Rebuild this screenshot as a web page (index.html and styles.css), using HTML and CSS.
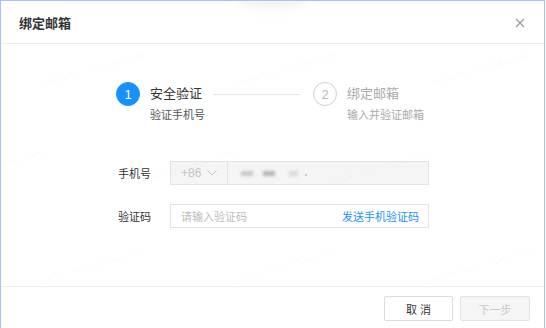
FILE: index.html
```html
<!DOCTYPE html>
<html lang="zh-CN">
<head>
    <meta charset="UTF-8">
    <title>绑定邮箱</title>
    <link rel="stylesheet" href="styles.css">
</head>
<body>
    <div class="dialog">
        <div class="top-shadow"></div>
        <div class="dialog-header">
            <span class="dialog-title">绑定邮箱</span>
            <svg class="close" width="10" height="10" viewBox="0 0 10 10">
                <path d="M1 1L9 9M9 1L1 9" stroke="#999" stroke-width="1.1" fill="none"/>
            </svg>
        </div>
        <div class="dialog-body">
            <div class="steps">
                <div class="step active">
                    <div class="step-num">1</div>
                    <div class="step-text">
                        <div class="step-title">安全验证</div>
                        <div class="step-desc">验证手机号</div>
                    </div>
                </div>
                <div class="step-line"></div>
                <div class="step">
                    <div class="step-num">2</div>
                    <div class="step-text">
                        <div class="step-title">绑定邮箱</div>
                        <div class="step-desc">输入并验证邮箱</div>
                    </div>
                </div>
            </div>
            <div class="form">
                <div class="form-row">
                    <label>手机号</label>
                    <div class="input disabled">
                        <div class="prefix">+86
                            <svg width="10" height="6" viewBox="0 0 10 6"><path d="M0.5 0.5L5 5L9.5 0.5" stroke="#c4c4c4" stroke-width="1" fill="none"/></svg>
                        </div>
                        <div class="masked">
                            <span class="blob b1"></span>
                            <span class="blob b2"></span>
                            <span class="blob b3"></span>
                            <span class="blob b4"></span>
                        </div>
                    </div>
                </div>
                <div class="form-row">
                    <label>验证码</label>
                    <div class="input">
                        <span class="placeholder">请输入验证码</span>
                        <a class="send">发送手机验证码</a>
                    </div>
                </div>
            </div>
        </div>
        <div class="dialog-footer">
            <button class="btn">取 消</button>
            <button class="btn btn-disabled">下一步</button>
        </div>
        <!-- 水印 -->
        <div class="watermarks">
            <span class="wm" style="left:38px;top:64px">wangyongwei 1618804931</span>
            <span class="wm" style="left:232px;top:64px">wangyongwei 1618804931</span>
            <span class="wm" style="left:426px;top:64px">wangyongwei 1618804931</span>
            <span class="wm" style="left:-60px;top:162px">wangyongwei 1618804931</span>
            <span class="wm" style="left:131px;top:162px">wangyongwei 1618804931</span>
            <span class="wm" style="left:325px;top:162px">wangyongwei 1618804931</span>
            <span class="wm" style="left:38px;top:260px">wangyongwei 1618804931</span>
            <span class="wm" style="left:232px;top:260px">wangyongwei 1618804931</span>
            <span class="wm" style="left:426px;top:260px">wangyongwei 1618804931</span>
        </div>
    </div>
</body>
</html>
```

FILE: styles.css
```css
* {
    margin: 0;
    padding: 0;
    box-sizing: border-box;
    font-family: "Liberation Sans", "Noto Sans CJK SC", sans-serif;
}
body {
    background: #fff;
    width: 546px;
    height: 328px;
    overflow: hidden;
}
.dialog {
    position: relative;
    width: 545px;
    height: 328px;
    overflow: hidden;
    background: #fff;
    border: 1px solid #a9c1f6;
    border-bottom: none;
}
.top-shadow {
    position: absolute;
    left: 236px;
    top: -14px;
    width: 70px;
    height: 22px;
    border-radius: 50%;
    background: rgba(0, 0, 0, 0.05);
    filter: blur(6px);
}
.dialog-header {
    height: 43px;
    border-bottom: 1px solid #ededed;
    display: flex;
    align-items: center;
    justify-content: space-between;
    padding: 0 19px 0 18px;
}
.dialog-title {
    font-size: 13px;
    font-weight: bold;
    color: #333;
}
.close {
    margin-top: 2px;
}
.dialog-body {
    height: 242px;
    padding: 38px 0 0 115px;
}
.steps {
    display: flex;
    align-items: flex-start;
}
.step {
    display: flex;
    align-items: flex-start;
}
.step-num {
    width: 24px;
    height: 24px;
    border-radius: 50%;
    border: 1px solid #cfcfcf;
    color: #bbb;
    font-size: 13px;
    display: flex;
    align-items: center;
    justify-content: center;
    margin-right: 10px;
}
.step.active .step-num {
    background: #1890ff;
    border-color: #1890ff;
    color: #fff;
}
.step-title {
    font-size: 13px;
    line-height: 24px;
    color: #aaa;
}
.step-desc {
    font-size: 11px;
    line-height: 16px;
    color: #aaa;
    margin-top: 1px;
}
.step.active .step-title {
    color: #333;
}
.step.active .step-desc {
    color: #555;
}
.step-line {
    width: 87px;
    height: 1px;
    background: #e6e6e6;
    margin: 12px 13px 0 8px;
}
.form {
    margin-top: 38px;
    padding-left: 2px;
    display: flex;
    flex-direction: column;
    gap: 19px;
}
.form-row {
    display: flex;
    align-items: center;
}
.form-row label {
    width: 52px;
    font-size: 11px;
    color: #333;
}
.input {
    width: 259px;
    height: 24px;
    border: 1px solid #e3e3e3;
    display: flex;
    align-items: center;
    justify-content: space-between;
    padding: 0 9px 0 10px;
    font-size: 11px;
}
.input.disabled {
    background: #f5f5f5;
    padding: 0;
    justify-content: flex-start;
}
.prefix {
    width: 57px;
    height: 100%;
    border-right: 1px solid #e3e3e3;
    display: flex;
    align-items: center;
    gap: 6px;
    padding-left: 10px;
    color: #c4c4c4;
    font-size: 12px;
}
.masked {
    position: relative;
    flex: 1;
    height: 100%;
}
.blob {
    position: absolute;
    top: 9px;
    height: 5px;
    filter: blur(1.5px);
}
.b1 { left: 13px; width: 12px; background: #c8c8c8; }
.b2 { left: 35px; width: 12px; background: #b5b5b5; }
.b3 { left: 61px; width: 9px; background: #d8d8d8; }
.b4 { left: 77px; top: 12px; width: 2px; height: 2px; background: #ccc; filter: none; }
.placeholder {
    color: #bdbdbd;
}
.send {
    color: #1890ff;
    cursor: pointer;
}
.dialog-footer {
    border-top: 1px solid #eeeeee;
    display: flex;
    justify-content: flex-end;
    gap: 7px;
    padding: 9px 14px 0 0;
}
.btn {
    width: 69px;
    height: 25px;
    border: 1px solid #dcdcdc;
    border-radius: 2px;
    background: #fff;
    color: #333;
    font-size: 11px;
}
.btn-disabled {
    width: 70px;
    background: #f5f5f5;
    color: #c8c8c8;
    border-color: #e3e3e3;
}
.watermarks {
    position: absolute;
    inset: 0;
    pointer-events: none;
}
.wm {
    position: absolute;
    width: 100px;
    font-size: 9px;
    white-space: nowrap;
    color: rgba(0, 0, 0, 0.045);
    transform: rotate(-15deg);
    transform-origin: center;
}
```
